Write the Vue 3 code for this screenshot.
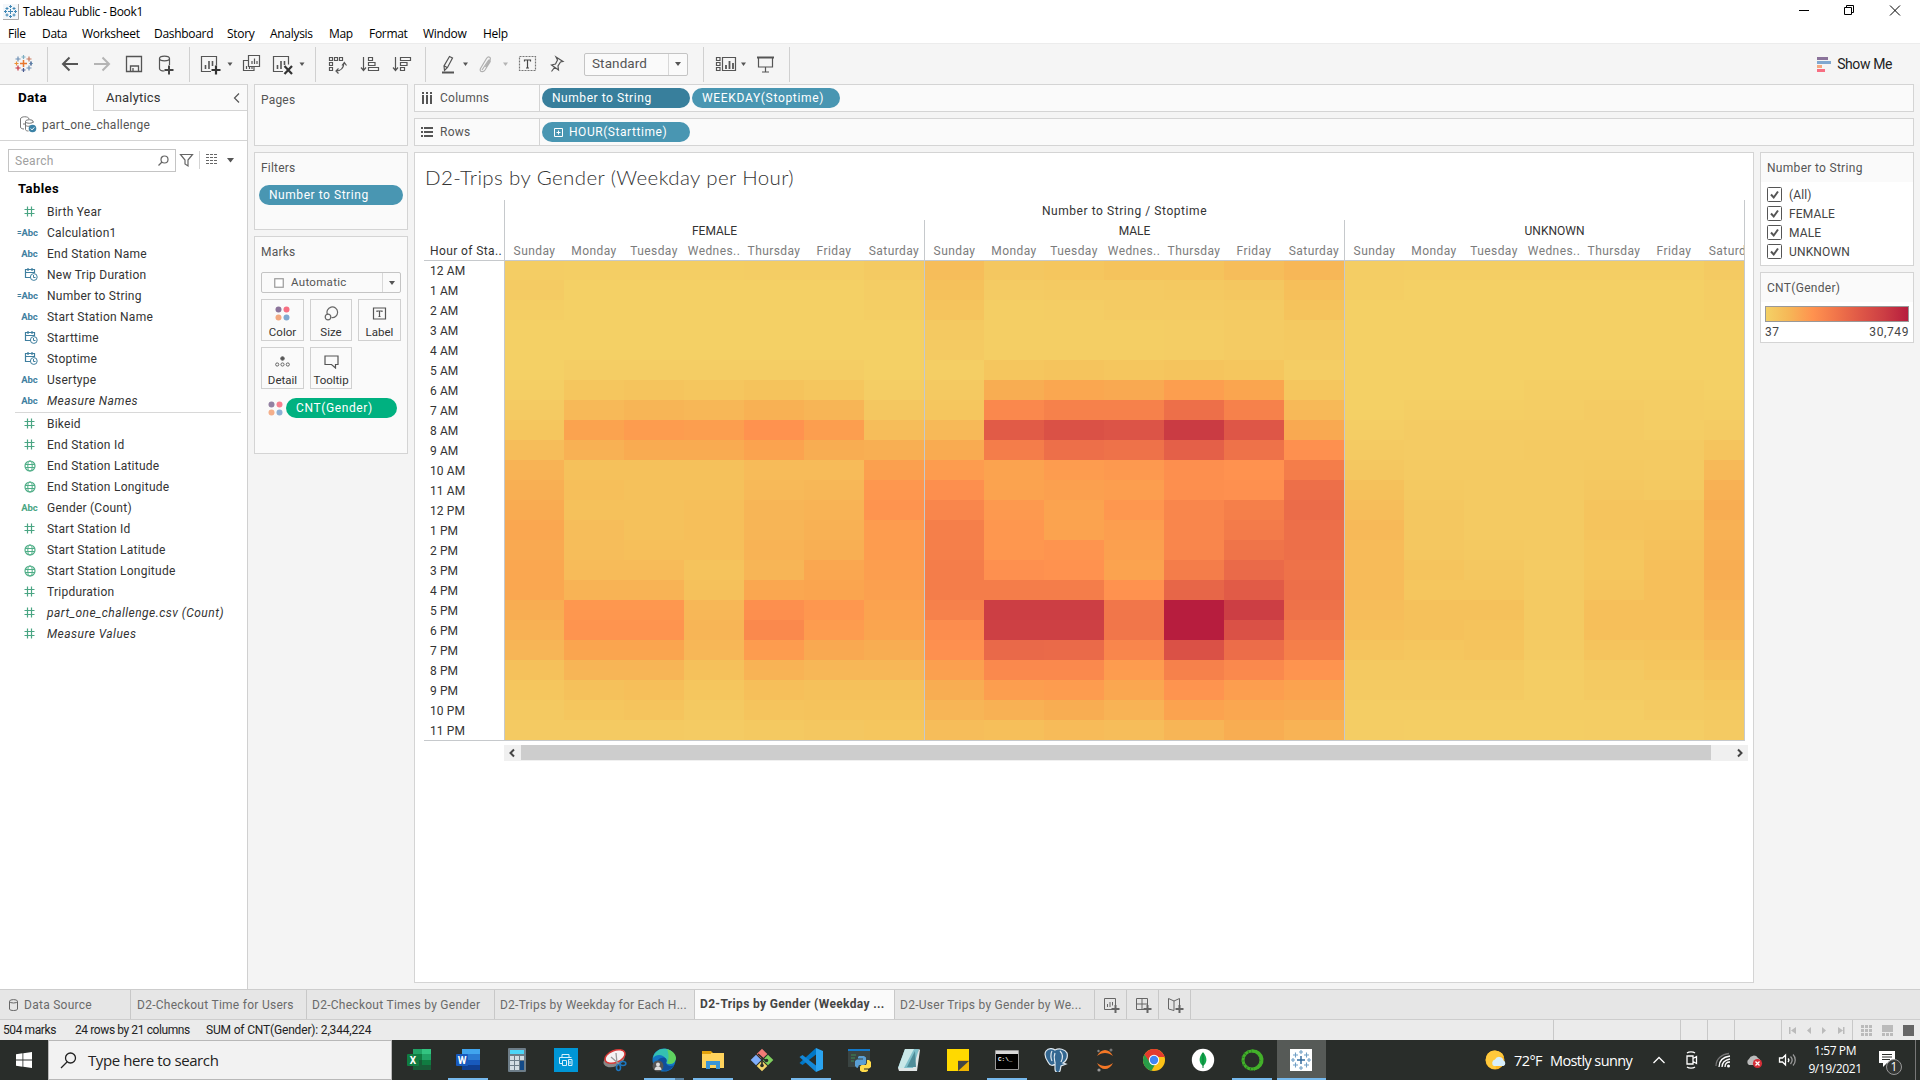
<script setup>
const menus = ['File', 'Data', 'Worksheet', 'Dashboard', 'Story', 'Analysis', 'Map', 'Format', 'Window', 'Help']

const dimensions = [
  ['num', 'Birth Year'], ['calc', 'Calculation1'], ['abc', 'End Station Name'], ['date', 'New Trip Duration'],
  ['calc', 'Number to String'], ['abc', 'Start Station Name'], ['date', 'Starttime'], ['date', 'Stoptime'],
  ['abc', 'Usertype'], ['abc', 'Measure Names', true],
]
const measures = [
  ['num', 'Bikeid'], ['num', 'End Station Id'], ['geo', 'End Station Latitude'], ['geo', 'End Station Longitude'],
  ['abcg', 'Gender (Count)'], ['num', 'Start Station Id'], ['geo', 'Start Station Latitude'],
  ['geo', 'Start Station Longitude'], ['num', 'Tripduration'], ['num', 'part_one_challenge.csv (Count)', true],
  ['num', 'Measure Values', true],
]
const fieldGroups = [dimensions, measures]

const hours = Array.from({ length: 24 }, (_, h) => `${h % 12 || 12} ${h < 12 ? 'AM' : 'PM'}`)
const days = ['Sunday', 'Monday', 'Tuesday', 'Wednes..', 'Thursday', 'Friday', 'Saturday']

/* trip counts as a percentage of the busiest hour, one line per hour */
const parse = (s) => s.trim().split('\n').map((l) => l.trim().split(' ').map(Number))
const groups = [
  { name: 'FEMALE', rows: parse(`3 2 2 2 3 3 5
    4 1 1 1 1 1 3
    2 1 1 1 1 1 2
    1 1 1 1 1 1 1
    1 1 1 1 1 1 1
    1 3 3 3 3 3 1
    2 8 9 8 10 8 3
    5 15 17 16 19 17 7
    8 26 29 28 33 28 13
    13 19 22 22 26 21 20
    18 11 11 11 14 14 27
    20 12 11 11 15 16 31
    22 11 11 12 17 18 32
    24 13 11 12 17 19 29
    23 13 12 12 18 20 29
    24 14 14 10 17 24 28
    24 18 18 11 24 25 27
    21 31 31 16 35 31 26
    19 32 32 17 38 29 25
    17 25 25 16 29 23 21
    11 17 17 11 18 16 16
    8 11 12 8 12 11 11
    6 8 9 6 9 10 10
    5 5 5 4 6 7 8`) },
  { name: 'MALE', rows: parse(`13 7 8 10 10 13 16
    11 4 5 5 6 7 12
    9 2 3 4 4 5 10
    6 2 2 2 3 4 6
    5 2 2 2 3 4 5
    2 8 9 8 9 8 3
    6 21 24 23 28 25 8
    8 39 43 43 51 43 15
    15 64 70 68 82 67 23
    22 45 51 50 61 50 34
    29 26 29 30 35 33 45
    35 26 27 28 35 34 51
    40 30 26 31 40 44 53
    44 31 26 28 40 46 51
    44 31 32 27 40 49 51
    45 34 33 26 45 54 50
    45 45 45 33 57 64 51
    43 80 80 48 100 80 50
    36 79 79 48 100 70 47
    34 55 54 40 70 52 44
    27 38 38 29 43 38 32
    21 28 29 24 32 28 26
    17 19 21 18 26 24 23
    13 12 14 13 17 21 18`) },
  { name: 'UNKNOWN', rows: parse(`3 2 2 2 2 2 5
    2 1 1 1 1 1 3
    1 1 1 1 1 1 2
    1 1 1 1 1 1 1
    1 1 1 1 1 1 1
    1 1 1 1 1 1 1
    1 1 1 2 2 2 1
    1 2 2 3 4 3 2
    3 4 4 4 4 3 4
    5 4 4 5 5 5 9
    7 5 5 5 6 5 15
    11 6 5 5 7 6 19
    13 7 5 5 9 9 21
    15 7 5 5 9 10 19
    14 7 6 5 8 11 20
    14 9 7 4 8 12 21
    14 8 8 5 9 12 20
    13 11 11 5 12 12 18
    12 11 10 5 12 12 17
    9 8 9 4 9 10 14
    6 6 6 3 6 8 11
    5 5 5 3 5 5 8
    3 3 3 3 3 5 6
    3 2 2 2 3 3 5`) },
]
const stops = [
  [0, 244, 209, 102], [5, 244, 202, 98], [10, 245, 195, 92], [15, 247, 185, 88], [20, 248, 175, 83],
  [25, 250, 165, 79], [33, 255, 146, 79], [45, 244, 125, 74], [52, 236, 109, 73], [66, 223, 88, 71],
  [80, 204, 62, 68], [100, 183, 29, 62],
]
function color(v) {
  const i = Math.max(1, stops.findIndex((s) => s[0] >= v))
  const a = stops[i - 1]
  const b = stops[i]
  const t = (v - a[0]) / (b[0] - a[0])
  return `rgb(${[1, 2, 3].map((k) => Math.round(a[k] + (b[k] - a[k]) * t)).join(',')})`
}

const tabs = [
  ['D2-Checkout Time for Users', 't1'], ['D2-Checkout Times by Gender', 't2'], ['D2-Trips by Weekday for Each H...', 't3'],
  ['D2-Trips by Gender (Weekday ...', 't4 active'], ['D2-User Trips by Gender by We...', 't5'],
]
const apps = ['excel', 'word', 'calcapp', 'print', 'snip', 'edge', 'explorer', 'git', 'code', 'python', 'notepad', 'sticky', 'cmd', 'pg', 'jupyter', 'chrome', 'mongo', 'anaconda', 'tableau']
const running = ['word', 'edge', 'explorer', 'code', 'cmd', 'anaconda', 'tableau']
</script>

<template>
  <div class="app">
    <header class="titlebar">
      <svg class="applogo" viewBox="0 0 16 16" width="16" height="16">
        <rect width="16" height="16" fill="#f4f7fa" />
        <path d="M15.5 0v15.5H0" fill="none" stroke="#aaa" />
        <path d="M7.5 5v5M5 7.5h5M7.5 1v3M6 2.5h3M7.5 11v3M6 12.5h3M2.5 6v3M1 7.500h3M12.500 6v3M11 7.500h3M4 3v3M2.500 4.500h3M11 3v3M9.500 4.500h3M4 9.500v3M2.500 11h3M11 9.500v3M9.500 11h3" stroke="#3f87b5" stroke-width="1" />
      </svg>
      <span class="apptitle">Tableau Public - Book1</span>
      <svg class="winctl" viewBox="1790 0 120 24" width="120" height="24" fill="none" stroke="#000">
        <path d="M1799 10.500h10M1844.500 7.500h7v7h-7zM1846.500 7.500v-2h7v7h-2M1890 5.500l10 10M1900 5.500l-10 10" />
      </svg>
    </header>
    <nav class="menubar"><span v-for="m in menus" :key="m" :class="'m-' + m.toLowerCase()">{{ m }}</span></nav>

    <div class="toolbar">
      <svg viewBox="0 43 47 41" width="47" height="41" stroke-width="1.200">
        <path d="M23.500 60v7M20 63.500h7" stroke="#e8762d" stroke-width="1.500" />
        <path d="M18 56.500v5M15.500 59h5M29 65.500v5M26.500 68h5" stroke="#6d8fb5" />
        <path d="M29 56.500v5M26.500 59h5" stroke="#c9785c" />
        <path d="M18 65.500v5M15.500 68h5" stroke="#c8303f" />
        <path d="M23.500 55v4M21.500 57h4M31 61.500v4M29 63.500h4" stroke="#7eaec2" />
        <path d="M23.500 68v4M21.500 70h4M31 61.500v4" stroke="#4b5d92" />
        <path d="M16.500 61.500v4M14.500 63.500h4" stroke="#eb9138" />
      </svg>
      <i class="sep"></i>
      <svg viewBox="48 43 141 41" width="141" height="41" fill="none" stroke="#555">
        <path d="M78 64H63M69.500 57.500L63 64l6.500 6.500" stroke-width="2" />
        <path d="M94 64h15M102.500 57.500L109 64l-6.500 6.500" stroke="#b4b4b4" stroke-width="2" />
        <path d="M126.500 56.500h15v15h-15zM130.500 71v-5h8v5M133 71v-3" stroke-width="1.300" />
        <path d="M159.500 58.500v10c0 1.500 2.500 2.500 5 2.500M169.500 58.500v6.500" stroke-width="1.200" />
        <ellipse cx="164.500" cy="58.500" rx="5" ry="2.300" stroke-width="1.200" />
        <path d="M169 65.500v9M164.500 70h9" stroke="#444" stroke-width="2" />
      </svg>
      <i class="sep"></i>
      <svg viewBox="190 43 125 41" width="125" height="41" fill="none" stroke="#555" stroke-width="1.200">
        <path d="M211 71.500h-9.500v-15h15v9" />
        <path d="M205.500 69v-4M209 69v-8M212.500 66v-5" stroke-width="1.600" />
        <path d="M216 65.500v9M211.500 70h9" stroke="#333" stroke-width="2.200" />
        <path d="M227.500 62.500h5l-2.500 3.500z" fill="#555" stroke="none" />
        <path d="M248.500 55.500h11v11h-11zM248 60.500h-4.500v10h10.500v-4M252 64v-3M254.500 64v-5.500M257 64v-3M246.500 69v-3M249.500 69v-2M252 69v-3" />
        <path d="M283 71.500h-9.500v-15h15v8" />
        <path d="M277.500 69v-4M281 69v-8M284.500 65v-4" stroke-width="1.600" />
        <path d="M284.500 66l7.500 8M292 66l-7.500 8" stroke="#333" stroke-width="2.200" />
        <path d="M299.500 62.500h5l-2.500 3.500z" fill="#555" stroke="none" />
      </svg>
      <i class="sep"></i>
      <svg viewBox="316 43 109 41" width="109" height="41" fill="none" stroke="#555" stroke-width="1.200">
        <path d="M329.500 57.500h3v3h-3zM334.500 57.500h3v3h-3zM339.500 57.500h3v3h-3zM329.500 62.500h3v3h-3zM329.500 67.500h3v3h-3zM336 71c5 0 7.500-3 8-8M342 65.500l2.300-3 2.200 3M338.500 68.500L336 71l2.500 2.500" />
        <path d="M363.500 57v13M361 67.500l2.500 3 2.500-3M368.500 57.500h4v3h-4zM368.500 62.500h6.500v3h-6.500zM368.500 67.500h10v3h-10z" />
        <path d="M395.500 57v13M393 67.500l2.500 3 2.500-3M400.500 57.500h10v3h-10zM400.500 62.500h6.500v3h-6.500zM400.500 67.500h4v3h-4z" />
      </svg>
      <i class="sep"></i>
      <svg viewBox="426 43 158 41" width="158" height="41" fill="none" stroke="#555" stroke-width="1.200">
        <path d="M449.500 56.500l3 1.500-5 9.500-3 3-.500-4.500zM444.500 66l3 1.800" />
        <path d="M442 72.500h12" stroke-width="2" />
        <path d="M463 62.500h5l-2.500 3.500z" fill="#555" stroke="none" />
        <path d="M482 70l6-9c1-2 3-.500 2 1l-5 8c-2 3-6 1.500-4.500-1.500l6-10c2-3 5-1 3.500 1.500l-4.500 7" stroke="#b0b0b0" />
        <path d="M503 62.500h5l-2.500 3.500z" fill="#b4b4b4" stroke="none" />
        <path d="M519.500 56.500h16v14h-16z" stroke-dasharray="2 1" stroke="#777" />
        <path d="M524.500 61.500v-1.500h6v1.500M527.500 60v8M526 68h3" stroke="#444" />
        <path d="M556 57l7 4.500-2.500.500-2.500 4 .500 4-7-5 4-1 2-4zM554.500 67.500l-3 4" />
      </svg>
      <div class="select std"><span>Standard</span><i class="drop"></i></div>
      <i class="sep gap15"></i>
      <svg viewBox="704 43 85 41" width="85" height="41" fill="none" stroke="#555" stroke-width="1.200">
        <path d="M716.500 57.500h3.500v3h-3.500zM716.500 62.500h3.500v3h-3.500zM716.500 67.500h3.500v3h-3.500zM722.500 57.500h13v13h-13z" />
        <path d="M726 69v-4M729.500 69v-8M733 69v-6" stroke-width="1.800" />
        <path d="M741 62.500h5l-2.500 3.500z" fill="#555" stroke="none" />
        <path d="M757 57.500h17" stroke-width="2" />
        <path d="M758.500 58v9h14v-9M765.500 67v5M762 72h7" />
      </svg>
      <i class="sep"></i>
      <div class="showme">
        <svg viewBox="0 0 14 15" width="14" height="15"><path d="M0 0h11v3H0z" fill="#8b739a" /><path d="M0 4h14v3H0z" fill="#80a8d0" /><path d="M0 8h5v3H0z" fill="#f3a880" /><path d="M0 12h8v3H0z" fill="#f76e82" /></svg>
        <span>Show Me</span>
      </div>
    </div>

    <main class="main">
      <aside class="data">
        <div class="panetabs"><b>Data</b><div><span>Analytics</span><svg viewBox="0 0 8 10" width="8" height="10"><path d="M6 .5L1.500 5 6 9.500" fill="none" stroke="#555" stroke-width="1.200" /></svg></div></div>
        <div class="source">
          <svg viewBox="0 0 17 17" width="17" height="17" fill="none" stroke="#777"><path d="M.5 3v8c0 1.500 2 2 3.500 2M.5 3C.5 0 9 0 9 3M5.500 5.500v8c0 1 1.500 1.500 3 1.500M13 7V5.500M3 8h2" /><ellipse cx="9.300" cy="5.500" rx="3.800" ry="1.800" /><path d="M5.500 9c1 1.500 3 1.500 4.500 1" /><circle cx="12.500" cy="12.500" r="3.800" fill="#3b82a6" stroke="none" /><path d="M10.700 12.500l1.300 1.400 2.300-2.500" stroke="#fff" /></svg>
          <span>part_one_challenge</span>
        </div>
        <div class="searchrow">
          <div class="sbox"><span>Search</span><svg viewBox="0 0 11 11" width="11" height="11" fill="none" stroke="#666" stroke-width="1.200"><circle cx="6.500" cy="4.500" r="3.500" /><path d="M4 7L.5 10.500" /></svg></div>
          <svg viewBox="178 149 64 23" width="64" height="23" fill="none" stroke="#666">
            <path d="M180.500 154.500h12l-4.500 5.500v6l-3-2v-4z" stroke-width="1.200" /><path d="M199.500 151v18" stroke="#d4d4d4" />
            <path d="M206 154.500h12M206 157.500h12M206 160.500h12M206 163.500h12" stroke-dasharray="3 1" stroke-width="1.200" />
            <path d="M227 158h7l-3.500 4.500z" fill="#555" stroke="none" />
          </svg>
        </div>
        <h4>Tables</h4>
        <div v-for="(list, gi) in fieldGroups" :key="gi" class="fields">
          <div v-for="f in list" :key="f[1]" class="field">
            <span class="ficon" :class="f[0]">
              <template v-if="f[0] === 'abc' || f[0] === 'abcg'">Abc</template>
              <template v-else-if="f[0] === 'calc'"><small>=</small>Abc</template>
              <svg v-else-if="f[0] === 'num'" viewBox="0 0 11 11" width="11" height="11"><path d="M3.500.5v10M7.500.5v10M.5 3.500h10M.5 7.500h10" fill="none" stroke="#4aa583" stroke-width="1.200" /></svg>
              <svg v-else-if="f[0] === 'date'" viewBox="0 0 14 13" width="14" height="13" fill="none" stroke="#3f7f9f"><path d="M6 9.500H1.500v-8h9V5M1.500 4.500h9M4 0v3M8 0v3" stroke-width="1.200" /><circle cx="9.800" cy="9" r="3.400" /><path d="M9.500 7v2.500h2" /></svg>
              <svg v-else viewBox="0 0 12 12" width="12" height="12" fill="none" stroke="#4fae87"><circle cx="6" cy="6" r="5" stroke-width="1.200" /><ellipse cx="6" cy="6" rx="2.200" ry="5" /><path d="M1 4.500h10M1 7.500h10" /></svg>
            </span>
            <span :class="{ it: f[2] }">{{ f[1] }}</span>
          </div>
        </div>
      </aside>

      <section class="cards">
        <div class="card pages"><h5>Pages</h5></div>
        <div class="card filters"><h5>Filters</h5><div class="pill">Number to String</div></div>
        <div class="card marks">
          <h5>Marks</h5>
          <div class="select auto"><svg viewBox="0 0 10 10" width="10" height="10"><rect x=".75" y=".75" width="8.500" height="8.500" fill="#fff" stroke="#999" stroke-width="1.200" /></svg><span>Automatic</span><i class="drop"></i></div>
          <div class="mbtns">
            <div><svg viewBox="0 0 15 15" width="15" height="15"><circle cx="3.500" cy="3.500" r="3" fill="#8b739a" /><circle cx="11.500" cy="3.500" r="3" fill="#f76e82" /><circle cx="3.500" cy="11.500" r="3" fill="#f3a880" /><circle cx="11.500" cy="11.500" r="3" fill="#80a8d0" /></svg>Color</div>
            <div><svg viewBox="0 0 15 15" width="15" height="15" fill="none" stroke="#666" stroke-width="1.200"><path d="M3.500 8.500a5.300 5.300 0 1 1 4 3" /><circle cx="4" cy="11" r="2.800" /></svg>Size</div>
            <div><svg viewBox="0 0 15 15" width="15" height="15" fill="none" stroke="#555" stroke-width="1.200"><path d="M1.500 2h12v11h-12zM5 6V5h5v1M7.500 5v5.500M6.500 10.500h2" /></svg>Label</div>
            <div><svg viewBox="0 0 15 15" width="15" height="15" fill="none" stroke="#666"><circle cx="7.500" cy="4.500" r="1.800" fill="#555" /><circle cx="2.200" cy="10.500" r="1.600" /><circle cx="7.500" cy="10.500" r="1.600" /><circle cx="12.800" cy="10.500" r="1.600" /></svg>Detail</div>
            <div><svg viewBox="0 0 15 15" width="15" height="15" fill="none" stroke="#555" stroke-width="1.200"><path d="M1 2h13v8.500h-2.500v3.500l-4-3.500H1z" /></svg>Tooltip</div>
          </div>
          <div class="mpill">
            <svg viewBox="0 0 15 15" width="15" height="15"><circle cx="3.500" cy="3.500" r="3" fill="#9381a2" /><circle cx="11.500" cy="3.500" r="3" fill="#f7808f" /><circle cx="3.500" cy="11.500" r="3" fill="#f4af8b" /><circle cx="11.500" cy="11.500" r="3" fill="#8eafd4" /></svg>
            <div class="pill green">CNT(Gender)</div>
          </div>
        </div>
      </section>

      <section class="work">
        <div class="shelf">
          <div class="slabel"><svg viewBox="0 0 12 12" width="12" height="12"><path d="M2 0v2M6 0v2M10 0v2M2 3v9M6 3v9M10 3v9" stroke="#555" stroke-width="2" /></svg>Columns</div>
          <div class="pill dark">Number to String</div><div class="pill caps">WEEKDAY(Stoptime)</div>
        </div>
        <div class="shelf">
          <div class="slabel"><svg viewBox="0 0 12 12" width="12" height="12"><path d="M0 2h2M0 6h2M0 10h2M3 2h9M3 6h9M3 10h9" stroke="#555" stroke-width="2" /></svg>Rows</div>
          <div class="pill"><svg class="plus" viewBox="0 0 9 9" width="9" height="9"><path d="M.5.5h8v8h-8zM2.500 4.500h4M4.500 2.500v4" fill="none" stroke="#fff" /></svg>HOUR(Starttime)</div>
        </div>
        <div class="split">
          <article class="sheet">
            <h1>D2-Trips by Gender (Weekday per Hour)</h1>
            <div class="viz">
              <div class="hours">
                <div class="hlabel">Hour of Sta..</div>
                <div v-for="h in hours" :key="h" class="hour">{{ h }}</div>
              </div>
              <div class="grid">
                <div class="axis">Number to String / Stoptime</div>
                <div class="groups">
                  <div v-for="g in groups" :key="g.name" class="group">
                    <div class="gname">{{ g.name }}</div>
                    <div class="days"><span v-for="d in days" :key="d">{{ d }}</span></div>
                    <div class="heat">
                      <template v-for="(r, ri) in g.rows" :key="ri"><i v-for="(v, ci) in r" :key="ci" :style="{ background: color(v) }"></i></template>
                    </div>
                  </div>
                </div>
              </div>
            </div>
            <div class="scroll">
              <svg viewBox="0 0 17 16" width="17" height="16"><path d="M10 4.500L6.500 8l3.500 3.500" fill="none" stroke="#444" stroke-width="2" /></svg>
              <div class="thumb"></div>
              <svg viewBox="0 0 17 16" width="17" height="16"><path d="M7 4.500l3.500 3.500L7 11.500" fill="none" stroke="#444" stroke-width="2" /></svg>
            </div>
          </article>
          <aside class="legends">
            <div class="legend">
              <h6>Number to String</h6>
              <ul>
                <li v-for="o in ['(All)', 'FEMALE', 'MALE', 'UNKNOWN']" :key="o"><svg viewBox="0 0 15 15" width="15" height="15" fill="none" stroke="#555"><rect x=".5" y=".5" width="14" height="14" rx="1" fill="#fff" /><path d="M4 7.500l2.700 3L11 4.500" stroke-width="2" /></svg>{{ o }}</li>
              </ul>
            </div>
            <div class="legend ramp">
              <h6>CNT(Gender)</h6>
              <div class="bar"></div>
              <div class="ends"><span>37</span><span>30,749</span></div>
            </div>
          </aside>
        </div>
      </section>
    </main>

    <div class="tabs">
      <div class="tab t0"><svg viewBox="0 0 9 12" width="9" height="12" fill="none" stroke="#666"><path d="M.5 2.500v7.500c0 2 8 2 8 0V2.500" /><ellipse cx="4.500" cy="2.300" rx="4" ry="1.700" /></svg>Data Source</div>
      <div v-for="t in tabs" :key="t[0]" class="tab" :class="t[1]">{{ t[0] }}</div>
      <div class="tab add"><svg viewBox="0 0 16 16" width="16" height="16" fill="none" stroke="#666"><path d="M8 12.500H.5v-11h11V8" /><path d="M3.500 10V7M6 10V5M8.500 8.500V5" /><path d="M11.500 8v8M7.500 12h8" stroke-width="2" /></svg></div>
      <div class="tab add"><svg viewBox="0 0 16 16" width="16" height="16" fill="none" stroke="#666"><path d="M8 12.500H.5v-11h11V8M.5 7h11M6 1.500v11" /><path d="M11.500 8v8M7.500 12h8" stroke-width="2" /></svg></div>
      <div class="tab add"><svg viewBox="0 0 16 16" width="16" height="16" fill="none" stroke="#666"><path d="M6 13.500L.5 12V1.500L6 4zM6 4l5.500-2.500V8" /><path d="M11.500 8v8M7.500 12h8" stroke-width="2" /></svg></div>
    </div>

    <footer class="status">
      <span class="s1">504 marks</span><span class="s2">24 rows by 21 columns</span><span class="s3">SUM of CNT(Gender): 2,344,224</span>
      <svg viewBox="1540 1019 380 21" width="380" height="21" fill="none" stroke="#c8c8c8">
        <path d="M1553.500 1019v21M1680.500 1019v21M1707.500 1019v21M1734.500 1019v21M1781.500 1019v21M1852.500 1019v21" />
        <g fill="#bbb" stroke="none"><path d="M1789 1026h1.500v7h-1.500zM1796 1026v7l-5-3.500zM1811 1026v7l-4-3.500zM1822 1026v7l4-3.500zM1838 1026v7l5-3.500zM1843 1026h1.500v7h-1.500z" />
          <path d="M1861 1024h3v3h-3zM1865 1024h3v3h-3zM1869 1024h3v3h-3zM1861 1028h3v3h-3zM1865 1028h3v3h-3zM1869 1028h3v3h-3zM1861 1032h3v3h-3zM1865 1032h3v3h-3zM1869 1032h3v3h-3zM1882 1024h11v7h-11zM1882 1032h3v3h-3zM1886 1032h3v3h-3zM1890 1032h3v3h-3z" /></g>
        <path d="M1903 1024h11v11h-11z" fill="#666" stroke="none" />
      </svg>
    </footer>

    <div class="taskbar">
      <div class="start"><svg viewBox="0 0 16 16" width="16" height="16" fill="#fff"><path d="M0 2.200l6.500-.9v6.300H0zM7.300 1.200L16 0v7.600H7.300zM0 8.400h6.500v6.300L0 13.800zM7.300 8.400H16V16l-8.700-1.200z" /></svg></div>
      <div class="tsearch"><svg viewBox="0 0 17 17" width="17" height="17" fill="none" stroke="#222" stroke-width="1.300"><circle cx="10.500" cy="6" r="5" /><path d="M7 10L1 16" /></svg><span>Type here to search</span></div>
      <div class="apps">
        <div v-for="a in apps" :key="a" class="appbtn" :class="{ run: running.includes(a), on: a === 'tableau', multi: a === 'edge' }">
          <svg viewBox="0 0 24 24" width="24" height="24">
            <g v-if="a === 'excel'"><path d="M6 1h9v5H6z" fill="#21a366" /><path d="M15 1h9v5h-9z" fill="#33c481" /><path d="M6 6h9v6H6z" fill="#107c41" /><path d="M15 6h9v6h-9z" fill="#21a366" /><path d="M6 12h18v10H6z" fill="#185c37" /><path d="M15 12h9v5h-9z" fill="#107c41" /><rect y="6" width="12" height="12" rx="1" fill="#107c41" /><text x="6" y="16" class="ofc">X</text></g>
            <g v-else-if="a === 'word'"><path d="M6 1h18v5H6z" fill="#41a5ee" /><path d="M6 6h18v6H6z" fill="#2b7cd3" /><path d="M6 12h18v5H6z" fill="#185abd" /><path d="M6 17h18v5H6z" fill="#103f91" /><rect y="6" width="12" height="12" rx="1" fill="#185abd" /><text x="6" y="16" class="ofc">W</text></g>
            <g v-else-if="a === 'calcapp'"><rect x="3" width="18" height="24" rx="1" fill="#6d7d88" /><path d="M5 2h14v4H5z" fill="#4cd5f7" /><path d="M5 8h4v4H5zM10 8h4v4h-4zM15 8h4v4h-4zM5 13h4v4H5zM10 13h4v4h-4zM5 18h4v4H5zM10 18h4v4h-4z" fill="#d3dde3" /><path d="M15 13h4v9h-4z" fill="#134a87" /></g>
            <g v-else-if="a === 'print'"><path d="M0 0h24v24H0z" fill="#0096d6" /><path d="M8 9.500V6.500h7v3M8 15.500H5.500v-6h12M8.500 12.500v5h4v-5zM14.500 11.500h3.500v6h-3.500zM16 13v3" fill="none" stroke="#d8f0fc" /></g>
            <g v-else-if="a === 'snip'"><ellipse cx="11" cy="12" rx="11" ry="6.500" transform="rotate(-22 11 12)" fill="#888" /><ellipse cx="12" cy="8.500" rx="10.500" ry="6" transform="rotate(-22 12 8.500)" fill="#f5f3f3" stroke="#d73937" stroke-width="1.500" /><path d="M13 5l1 10M8 9l8 7" stroke="#999" stroke-width="1.300" /><ellipse cx="15.500" cy="19.500" rx="2" ry="3" fill="none" stroke="#1e76be" stroke-width="1.600" /><ellipse cx="20" cy="15.500" rx="2.800" ry="2" fill="none" stroke="#1e76be" stroke-width="1.600" /></g>
            <g v-else-if="a === 'edge'"><circle cx="12" cy="12" r="11.500" fill="#1375c5" /><path d="M1 10C3-1 18-3 23 8c2 6-3 9-7 8-3-1-1-3-2-5-3-5-10-5-13-1z" fill="#35c1b1" /><path d="M15 1c7 2 11 8 8 12-1 3-6 4-8 2 2-4 2-9 0-14z" fill="#5fd25f" /><path d="M9 10c5-2 7 2 5 5 1 3 5 4 8 2-3 7-14 8-17 0-1-3 1-6 4-7z" fill="#0f4f9c" /><circle cx="6" cy="18" r="5.500" fill="#555" /><circle cx="6" cy="16.500" r="2" fill="#ddd" /><path d="M2.500 22c0-5 7-5 7 0z" fill="#ddd" /></g>
            <g v-else-if="a === 'explorer'"><path d="M1 3h9l2 2H1z" fill="#dda008" /><path d="M1 5h22v15H1z" fill="#ffd35c" /><path d="M1 3h9v3H1z" fill="#e2a20d" /><path d="M5 21v-8h14v8h-4v-4H9v4z" fill="#3b96d8" /></g>
            <g v-else-if="a === 'git'"><g transform="rotate(45 12 12)"><path d="M4 4h7.500v7.500H4z" fill="#f27b76" /><path d="M4 12.500h7.500V20H4z" fill="#80aefb" /><path d="M12.500 12.500H20V20h-7.500z" fill="#f3d46a" /><path d="M12.500 4H20v7.500h-7.500z" fill="#7fcf5e" /></g><path d="M8 6l8 7M12 9v9" stroke="#2a2d2a" stroke-width="1.600" /><circle cx="12" cy="17.500" r="1.800" fill="#2a2d2a" /><circle cx="16.500" cy="12.500" r="1.800" fill="#2a2d2a" /></g>
            <g v-else-if="a === 'code'"><path d="M17 0l7 3v18l-7 3z" fill="#2aa3f0" /><path d="M17 0v6.500L3.500 17 .5 15z" fill="#0078c8" /><path d="M17 24v-6.500L3.500 7 .5 9z" fill="#1488d8" /></g>
            <g v-else-if="a === 'python'"><path d="M0 1h22v18H0z" fill="#3a4442" /><path d="M0 1h22v2H0z" fill="#1479c9" /><path d="M3 7h5M3 10h4M3 13h3" stroke="#3f8b55" /><path d="M11 8h5l2 1.500v6l-2 1.500h-5l-1.500 3H9l-2-2v-5l2-1.500h6v-1h-5V9z" fill="#5a9fd4" /><path d="M19 12h2l2 2v5l-2 1.500h-5v1h4v1.500l-2 1h-4l-2-1.500v-4l1.500-1.500h4.500l1-2z" fill="#ffdb4a" /></g>
            <g v-else-if="a === 'notepad'"><path d="M8 1h14l-3 19H1z" fill="#7fbfca" /><path d="M8 1h9L7 20H1z" fill="#c9e8e8" /><path d="M1 20h15l6-19 1 1-3 21H2z" fill="#dfe5e6" /><path d="M18 3l1 16h-9z" fill="#4f8d99" /></g>
            <g v-else-if="a === 'sticky'"><path d="M1 1h22v12l-11 10H1z" fill="#ffd900" /><path d="M12 12h11v11H12z" fill="#f0b400" /><path d="M12 13h11L12 23z" fill="#444" /></g>
            <g v-else-if="a === 'cmd'"><path d="M.5 2.500h23v19H.5z" fill="#000" stroke="#999" /><path d="M1 3h22v3H1z" fill="#d8d8d8" /><text x="3" y="13" class="cmdt">C:\_</text></g>
            <g v-else-if="a === 'pg'"><path d="M2 3c3-4 8-2 9-1 4-2 10-1 12 3 1 4-1 8-4 10l3 1-5 2-1 5c-2 3-5 1-5-2v-5c-2 2-5 2-7-2C2 11 0 6 2 3z" fill="#336791" stroke="#dfe8ef" stroke-width="1.200" /><path d="M8 3c-2 3-1 8 0 10M16 3c3 3 3 7 1 11M11 15c0-3-2-5 0-10" fill="none" stroke="#dfe8ef" stroke-width="1.200" /></g>
            <g v-else-if="a === 'jupyter'"><path d="M4 8c4-8 12-8 16 0-5-4-11-4-16 0zM4 15c4 8 12 8 16 0-5 4-11 4-16 0z" fill="#f37726" /><circle cx="5.500" cy="3" r="1.200" fill="#888" /><circle cx="18" cy="2" r="1.500" fill="#777" /><circle cx="6" cy="22" r="1.600" fill="#999" /></g>
            <g v-else-if="a === 'chrome'"><circle cx="12" cy="12" r="11" fill="#fbc116" /><path d="M2.500 6.500A11 11 0 0 1 21.500 6.500L23 9H12L7 15z" fill="#e33b2e" /><path d="M2.500 6.500L9 16l4 .5-3.500 6.300A11 11 0 0 1 2.500 6.500z" fill="#289c48" /><circle cx="12" cy="12" r="5.200" fill="#fff" /><circle cx="12" cy="12" r="4.200" fill="#4285f4" /></g>
            <g v-else-if="a === 'mongo'"><circle cx="12" cy="12" r="11.200" fill="#fff" /><path d="M12 4c5 6 4 11 0 14-4-3-5-8 0-14z" fill="#11a84c" /><path d="M12 5v15" stroke="#0c7b37" /></g>
            <g v-else-if="a === 'anaconda'"><circle cx="12" cy="12" r="9" fill="none" stroke="#43b02a" stroke-width="3" /><circle cx="12" cy="12" r="9.500" fill="none" stroke="#287f21" stroke-width="3" stroke-dasharray="1 3" /><path d="M12 3a9 9 0 0 1 2 18" fill="none" stroke="#43b02a" stroke-width="3" /></g>
            <g v-else><path d="M1 1h22v22H1z" fill="#fff" /><path d="M12 8v8M8 12h8" stroke="#356c9f" stroke-width="1.500" /><path d="M12 2v4M10 4h4M12 18v4M10 20h4M4 10v4M2 12h4M20 10v4M18 12h4M6.500 4.500v5M4 7h5M17.500 4.500v5M15 7h5M6.500 14.500v5M4 17h5M17.500 14.500v5M15 17h5" stroke="#6f9fc6" stroke-width="1.100" /></g>
          </svg>
        </div>
      </div>
      <div class="tray">
        <svg viewBox="0 0 24 24" width="24" height="24"><circle cx="11" cy="12" r="9.500" fill="#fdb827" /><path d="M3 7a9.500 9.500 0 0 1 17 2c-6-2-9 3-8 12A9.500 9.500 0 0 1 3 7z" fill="#ffc93c" /><path d="M10 18a3.500 3.500 0 0 1 1-6.500 4.500 4.500 0 0 1 8.500 1 3 3 0 0 1 0 5.500z" fill="#d8effc" /></svg>
        <span class="wx">72°F</span><span class="wx2">Mostly sunny</span>
        <svg viewBox="1644 1040 160 40" width="160" height="40" fill="none" stroke="#fff" stroke-width="1.300">
          <path d="M1653.500 1063l5.500-5.500 5.500 5.500" />
          <path d="M1687 1056h6v8h-6zM1693 1058.500l3.500-2v7l-3.500-2M1687 1053c2-1.500 6-1.500 8 0M1687 1067c2 1.500 6 1.500 8 0" />
          <path d="M1719 1067c0-6 4-10 11-11M1722 1067c0-4 3-7 8-8M1725 1067c0-3 2-5 5-5" /><circle cx="1728.500" cy="1066" r="1.500" fill="#fff" stroke="none" /><path d="M1716 1066c0-7 6-12 13-12.500" stroke="#777" />
          <path d="M1749 1065a3.500 3.500 0 0 1 0-6 5 5 0 0 1 9-1 4 4 0 0 1 1 7z" fill="#bbb" stroke="none" /><circle cx="1757.500" cy="1063.500" r="4.600" fill="#d42f38" stroke="none" /><path d="M1755.500 1061.500l4 4M1759.500 1061.500l-4 4" />
          <path d="M1779.500 1058h3l3-3v10l-3-3h-3zM1788 1058.500c1 1 1 2.500 0 3.500" /><path d="M1790.500 1056.500c2 2 2 5 0 7.500M1793 1054.500c3 3 3 8 0 11" stroke="#999" />
        </svg>
        <div class="clock"><span>1:57 PM</span><span>9/19/2021</span></div>
        <svg class="notif" viewBox="0 0 26 26" width="26" height="26"><path d="M1 1h16v12H9l-4 4v-4H1z" fill="#fff" /><path d="M4 4.500h10M4 7h10M4 9.500h8" stroke="#2a2d2a" stroke-width="1.200" /><circle cx="16" cy="17" r="7.500" fill="#343735" stroke="#999" /><text x="16" y="21" class="one">1</text></svg>
        <i class="peek"></i>
      </div>
    </div>
  </div>
</template>

<style>
body { background: #f4f4f4; overflow: hidden; }
</style>

<style scoped>
* { box-sizing: border-box; }
svg { display: block; flex: none; }
h1, h4, h5, h6, ul { margin: 0; padding: 0; font-weight: 400; list-style: none; }
.app { width: 1920px; height: 1080px; display: flex; flex-direction: column; overflow: hidden; background: #f4f4f4; font: 12px/1 Roboto, "Open Sans", sans-serif; letter-spacing: .3px; color: #333; white-space: nowrap; }
.titlebar { height: 24px; flex: none; background: #fff; display: flex; align-items: center; padding-left: 3px; font-family: "Open Sans", sans-serif; color: #000; }
.apptitle { margin-left: 4px; letter-spacing: -.3px; }
.winctl { margin-left: auto; margin-right: 10px; }
.menubar { height: 19px; flex: none; background: #fff; display: flex; align-items: center; padding-left: 8px; font: 12px/1 "Open Sans", sans-serif; letter-spacing: -.3px; color: #000; }
.m-file { width: 34px; } .m-data { width: 40px; } .m-worksheet { width: 72px; } .m-dashboard { width: 73px; } .m-story { width: 43px; }
.m-analysis { width: 59px; } .m-map { width: 40px; } .m-format { width: 54px; } .m-window { width: 60px; }
.toolbar { height: 41px; flex: none; display: flex; align-items: center; background: #f5f5f5; border-top: 1px solid #ececec; }
.toolbar > svg { margin-top: -1px; }
.sep { width: 1px; height: 35px; background: #d0d0d0; }
.gap15 { margin-left: 15px; }
.select { display: flex; align-items: center; border: 1px solid #c4c4c4; border-radius: 2px; background: #fafafa; color: #555; }
.drop { margin-left: auto; height: 100%; border-left: 1px solid #d8d8d8; width: 19px; display: flex; align-items: center; justify-content: center; }
.drop::after { content: ""; border: 3.500px solid transparent; border-top: 4px solid #555; border-bottom: 0; }
.std { width: 104px; height: 23px; padding-left: 7px; font-size: 13.500px; letter-spacing: .1px; }
.showme { display: flex; align-items: center; gap: 6px; margin-left: auto; margin-right: 28px; font-size: 14px; letter-spacing: -.4px; color: #222; }
.main { height: 905px; flex: none; display: flex; gap: 6px; padding-right: 6px; }
.data { width: 248px; background: #fff; border-right: 1px solid #d0d0d0; border-top: 1px solid #d4d4d4; }
.panetabs { display: flex; height: 26px; }
.panetabs b { width: 93px; padding: 6px 0 0 18px; font-size: 13.500px; letter-spacing: .3px; color: #000; }
.panetabs > div { flex: 1; display: flex; align-items: center; justify-content: space-between; background: #fafafa; border: solid #d4d4d4; border-width: 0 0 1px 1px; padding: 0 6px 0 12px; font-size: 13px; letter-spacing: .2px; }
.source { height: 30px; border-bottom: 1px solid #d4d4d4; display: flex; align-items: center; padding: 0 0 2px 20px; gap: 5px; color: #555; letter-spacing: .25px; }
.searchrow { display: flex; padding: 8px 0 0 8px; height: 31px; }
.sbox { width: 168px; height: 23px; border: 1px solid #c4c4c4; display: flex; align-items: center; justify-content: space-between; padding: 0 6px; color: #a0a0a0; margin-right: 2px; }
.data h4 { height: 29px; line-height: 34px; padding-left: 18px; font-weight: 700; font-size: 13px; color: #000; letter-spacing: .45px; }
.fields { display: flex; flex-direction: column; padding-bottom: 1px; }
.fields + .fields { margin: 0 6px 0 15px; border-top: 1px solid #d8d8d8; }
.fields + .fields .ficon { margin-left: 0; }
.field { height: 21px; display: flex; align-items: center; color: #333; letter-spacing: .24px; }
.ficon { width: 29px; margin-left: 15px; margin-right: 3px; display: flex; justify-content: center; align-items: center; font-size: 9.500px; font-weight: 700; letter-spacing: -.1px; color: #3f7f9f; }
.ficon.abcg { color: #4aa583; }
.ficon small { font-size: 8px; margin-left: -4px; }
.ficon.date { padding-left: 3px; }
.it { font-style: italic; letter-spacing: .46px; }
.cards { width: 154px; display: flex; flex-direction: column; gap: 6px; }
.card { border: 1px solid #d4d4d4; background: #fafafa; }
.card h5 { font-size: 12px; padding: 9px 0 0 6px; color: #555; letter-spacing: .2px; }
.pages { height: 62px; } .filters { height: 78px; } .marks { height: 218px; }
.pill { height: 20px; border-radius: 10px; background: #4996b2; color: #fff; display: flex; align-items: center; padding-left: 10px; width: 148px; font-size: 12px; font-weight: 400; letter-spacing: .55px; }
.pill.caps { letter-spacing: .68px; }
.pill.dark { background: #387f9c; }
.plus { margin: 0 6px 0 2px; }
.filters .pill { width: 144px; margin: 11px 0 0 4px; }
.auto { width: 140px; height: 21px; margin: 14px 0 0 6px; padding-left: 12px; gap: 7px; font-size: 11.500px; }
.auto .drop { width: 18px; }
.mbtns { display: grid; grid-template-columns: 43px 42px 43px; column-gap: 6px; row-gap: 6px; margin: 6px 0 0 6px; }
.mbtns > div { height: 42px; border: 1px solid #d0d0d0; display: flex; flex-direction: column; align-items: center; padding-top: 6px; gap: 6px; font-size: 11.500px; letter-spacing: 0; }
.mpill { display: flex; align-items: center; padding: 9px 0 0 13px; gap: 3px; }
.pill.green { background: #00b180; width: 111px; letter-spacing: .62px; }
.work { width: 1500px; display: flex; flex-direction: column; gap: 6px; }
.shelf { height: 28px; border: 1px solid #d4d4d4; background: #fafafa; display: flex; align-items: center; gap: 2px; }
.slabel { width: 125px; height: 26px; border-right: 1px solid #d4d4d4; display: flex; align-items: center; gap: 7px; padding-left: 6px; color: #555; letter-spacing: .25px; }
.split { display: flex; gap: 6px; }
.sheet { width: 1340px; height: 831px; border: 1px solid #d4d4d4; background: #fff; }
.sheet h1 { height: 47px; padding-left: 10px; font: 300 20.500px/48px Lato, Roboto, sans-serif; letter-spacing: .39px; color: #333; }
.viz { width: 1321px; margin-left: 9px; display: flex; border-bottom: 1px solid #c6c9cc; }
.hours { width: 80px; }
.hlabel { height: 61px; padding: 45px 0 0 6px; border-bottom: 1px solid #c6c9cc; letter-spacing: .4px; }
.hour { height: 20px; display: flex; align-items: center; padding-left: 6px; font-size: 12px; letter-spacing: .1px; }
.hour:last-child { height: 19px; }
.grid { width: 1241px; }
.axis { height: 20px; border: solid #c6c9cc; border-width: 0 1px; text-align: center; line-height: 23px; letter-spacing: .56px; }
.groups { display: flex; }
.group { width: 420px; border-left: 1px solid #c6c9cc; overflow: hidden; }
.group:last-child { width: 401px; border-right: 1px solid #c6c9cc; }
.gname, .days, .heat { width: 419px; }
.gname { height: 20px; text-align: center; line-height: 23px; letter-spacing: 0; font-size: 12px; }
.days, .heat { display: grid; grid-template-columns: 59px repeat(6, 60px); }
.days { height: 21px; border-bottom: 1px solid #c6c9cc; text-align: center; line-height: 22px; color: #7c7c7c; letter-spacing: .42px; }
.heat { grid-template-rows: 19px repeat(23, 20px); }
.scroll { width: 1244px; height: 16px; margin: 4px 0 0 89px; background: #f0f0f0; display: flex; }
.thumb { width: 1190px; height: 15px; background: #cdcdcd; margin-right: 20px; }
.legends { width: 154px; display: flex; flex-direction: column; gap: 6px; }
.legend { height: 114px; border: 1px solid #d4d4d4; background: #fff; }
.legend h6 { height: 29px; background: #fafafa; font-size: 12px; line-height: 30px; padding-left: 6px; color: #555; letter-spacing: .3px; }
.legend ul { padding: 5px 0 0 6px; }
.legend li { height: 19px; display: flex; align-items: flex-start; gap: 7px; line-height: 16px; color: #444; letter-spacing: .15px; }
.legend.ramp { height: 71px; }
.bar { width: 144px; height: 16px; margin: 4px 0 0 4px; border: 1px solid #999; background: linear-gradient(90deg, #f4d166, #f6b757 16%, #ff924f 33%, #f0744a 50%, #df5847 66%, #cc3e44 83%, #b71d3e); }
.ends { display: flex; justify-content: space-between; padding: 4px 4px 0; color: #444; letter-spacing: .6px; }
.tabs { height: 31px; flex: none; display: flex; background: #e6e6e6; border: solid #cdcdcd; border-width: 1px 0; }
.tab { border-right: 1px solid #c8c8c8; padding: 0 0 0 6px; height: 29px; line-height: 30px; color: #6a6a6a; letter-spacing: .27px; }
.t0 { width: 131px; display: flex; align-items: center; gap: 6px; padding-left: 9px; }
.t1 { width: 176px; } .t2 { width: 188px; padding-left: 5px; } .t3 { width: 200px; padding-left: 5px; letter-spacing: .23px; } .t4 { width: 200px; } .t5 { width: 200px; padding-left: 5px; }
.tab.active { background: #fafafa; color: #444; font-weight: 700; line-height: 28px; letter-spacing: .34px; padding-left: 5px; }
.add { width: 32px; display: flex; align-items: center; padding-left: 9px; }
.status { height: 20px; flex: none; background: #ebebeb; display: flex; align-items: center; padding-left: 3px; color: #222; letter-spacing: -.4px; }
.status svg { margin-left: auto; }
.s1 { width: 72px; } .s2 { width: 131px; } .s3 { letter-spacing: -.17px; }
.taskbar { height: 40px; flex: none; background: #292d2a; display: flex; color: #fff; font-family: "Open Sans", sans-serif; }
.start { width: 48px; display: flex; align-items: center; justify-content: center; }
.tsearch { width: 344px; background: #f2f2f2; border: 1px solid #b8b8b8; display: flex; align-items: center; padding-left: 11px; gap: 11px; color: #222; font-size: 15px; letter-spacing: -.4px; margin-right: 3px; }
.apps { display: flex; }
.appbtn { width: 49px; height: 40px; padding: 8px 0 0 12px; position: relative; }
.appbtn.run::after { content: ""; position: absolute; left: 4px; bottom: 0; width: 40px; height: 2px; background: #76b9ed; }
.appbtn.multi::after { background: linear-gradient(90deg, #76b9ed 31px, #567f9f 31px); }
.appbtn.on { background: #565a57; }
.appbtn.on::after { left: 0; width: 49px; }
.ofc { font: 700 10px Roboto, sans-serif; fill: #fff; text-anchor: middle; letter-spacing: 0; }
.cmdt { font: 700 6px "Liberation Mono", monospace; fill: #fff; letter-spacing: 0; }
.tray { margin-left: auto; width: 436px; display: flex; align-items: center; }
.wx { margin: 2px 0 0 6px; width: 36px; font-size: 14.500px; letter-spacing: -.6px; }
.wx2 { margin-top: 2px; width: 94px; font-size: 14.500px; letter-spacing: -.6px; }
.clock { width: 62px; margin-left: 0; display: flex; flex-direction: column; align-items: center; gap: 6px; font-size: 12px; letter-spacing: -.4px; }
.notif { margin: 6px 0 0 12px; }
.one { font: 12px "Open Sans", sans-serif; fill: #fff; text-anchor: middle; letter-spacing: 0; }
.peek { width: 1px; height: 40px; background: #777; margin-left: auto; margin-right: 4px; }
</style>
